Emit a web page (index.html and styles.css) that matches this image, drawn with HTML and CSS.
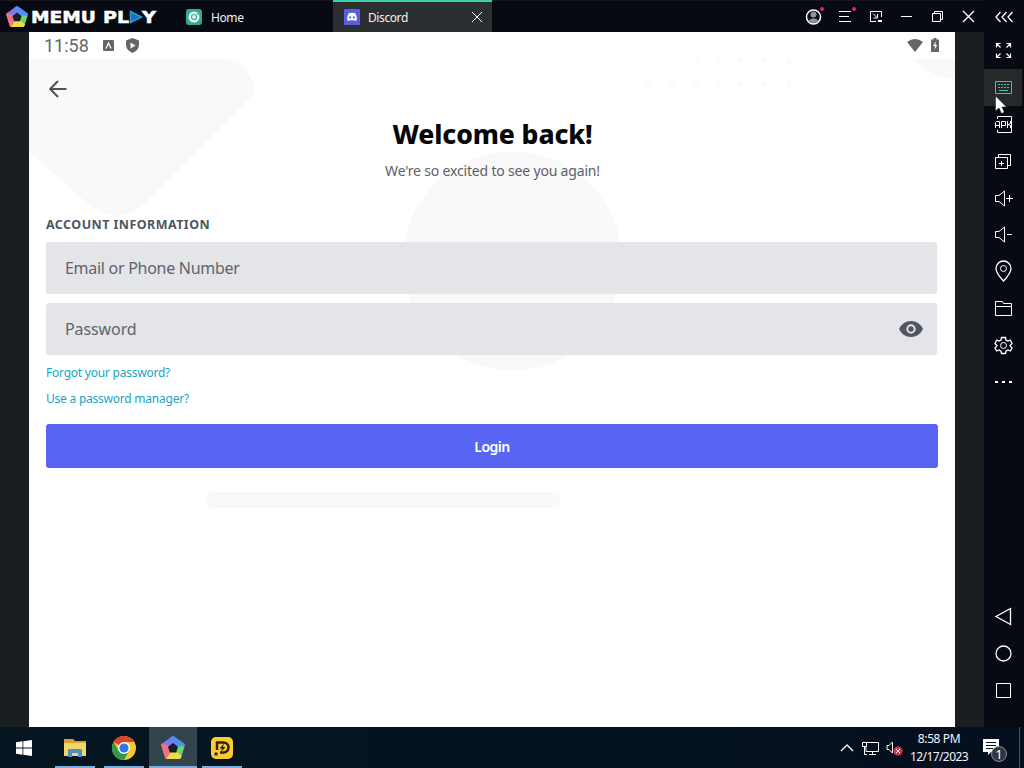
FILE: index.html
```html
<!DOCTYPE html>
<html lang="en">
<head>
    <meta charset="UTF-8">
    <meta name="viewport" content="width=device-width, initial-scale=1.0">
    <link rel="stylesheet" href="styles.css">
    <title>MEmu Play - Discord</title>
</head>
<body>
    <!-- shared pentagon logo -->
    <svg class="defs" width="0" height="0">
        <symbol id="pentagon" viewBox="0 0 24 24">
            <path d="M1 7.500L11 .6Q12 0 13 .6L23 7.500Q24 8.300 23.700 9.500L20 21.500Q19.500 23 18 23H6Q4.500 23 4 21.500L.3 9.500Q0 8.300 1 7.500Z" fill="#7f78ee"/>
            <path d="M9 2L11 .6Q12 0 13 .6L23 7.500Q24 8.300 23.700 9.500L23 12L16.500 11Z" fill="#4d8ff2"/>
            <path d="M23.400 10.500L20 21.500Q19.500 23 18 23L14.500 15L16.500 10Z" fill="#6fd56a"/>
            <path d="M20.500 20L20 21.500Q19.500 23 18 23H6Q4.800 23 4.300 22L10 15.500L15 15.500Z" fill="#f1dc45"/>
            <path d="M5.500 22.900Q4.300 22.500 4 21.500L.3 9.500Q0 8.300 1 7.500L8 10L9.500 16Z" fill="#ee7580"/>
            <path d="M12 7L17 10.800L15.200 16.500H8.800L7 10.800Z" class="pentagon-hole"/>
        </symbol>
    </svg>

    <div class="emulator">
        <div class="window">
            <header class="titlebar">
                <svg class="logo" width="22" height="22"><use href="#pentagon"/></svg>
                <svg class="wordmark" width="126" height="24" viewBox="0 0 126 24">
                    <text x="0" y="17.500" textLength="65" lengthAdjust="spacingAndGlyphs">MEMU</text>
                    <text x="72" y="17.500" textLength="26" lengthAdjust="spacingAndGlyphs">PL</text>
                    <path d="M99.500 6.500L110.500 12L99.500 17.500Z" fill="#1d6fb8" stroke="#2a9bd6" stroke-width="1.500"/>
                    <text x="111" y="17.500" textLength="14" lengthAdjust="spacingAndGlyphs">Y</text>
                </svg>
                <div class="tab tab-home">
                    <svg width="16" height="16" viewBox="0 0 16 16">
                        <rect width="16" height="16" rx="3" fill="#2fae8c"/>
                        <circle cx="8" cy="8" r="5.500" fill="#e9f8f4"/>
                        <circle cx="8" cy="8" r="2.500" fill="none" stroke="#2fae8c" stroke-width="1.200"/>
                        <path d="M10.500 4L12.500 6" stroke="#2fae8c"/>
                    </svg>
                    <span>Home</span>
                </div>
                <div class="tab tab-active">
                    <svg width="16" height="16" viewBox="0 0 16 16">
                        <rect width="16" height="16" rx="1" fill="#5a60dd"/>
                        <path d="M4.800 4.300Q8 3.300 11.200 4.300Q13.200 7.300 13 11Q11.800 12 10.600 12L10 11Q8 11.600 6 11L5.400 12Q4.200 12 3 11Q2.800 7.300 4.800 4.300Z" fill="#fff"/>
                        <circle cx="6.200" cy="8.400" r="1.100" fill="#5a60dd"/>
                        <circle cx="9.800" cy="8.400" r="1.100" fill="#5a60dd"/>
                    </svg>
                    <span>Discord</span>
                    <svg class="line tab-close" width="12" height="12" viewBox="0 0 12 12"><path d="M1 1L11 11M11 1L1 11"/></svg>
                </div>
                <div class="window-buttons">
                    <svg class="line" width="31" height="32" viewBox="0 0 31 32">
                        <circle cx="15.500" cy="17" r="7" fill="#0a0d16" stroke-width="1.500"/>
                        <circle cx="15.500" cy="14.500" r="3" class="grey"/>
                        <path d="M10 21Q15.500 15.500 21 21Q15.500 25 10 21Z" class="grey"/>
                        <circle cx="24" cy="9" r="2" class="dot"/>
                    </svg>
                    <svg class="line" width="31" height="32" viewBox="0 0 31 32">
                        <path d="M10 11.500H22M10 16.500H20M10 21.500H22"/>
                        <circle cx="25" cy="9" r="2" class="dot"/>
                    </svg>
                    <svg class="line" width="31" height="32" viewBox="0 0 31 32">
                        <path d="M16 21.500H10.500V11.500H21.500V17M13 13.500L17 17.500M17.500 14V18H13.500"/>
                        <path d="M18 21H22" stroke-width="2"/>
                    </svg>
                    <svg class="line" width="31" height="32" viewBox="0 0 31 32"><path d="M10 16.500H21"/></svg>
                    <svg class="line" width="31" height="32" viewBox="0 0 31 32"><path d="M10.500 13.500H18.500V21.500H10.500ZM12.500 13.500V11.500H20.500V19.500H18.500"/></svg>
                    <svg class="line" width="31" height="32" viewBox="0 0 31 32"><path d="M10 11L21 22M21 11L10 22" stroke-width="1.300"/></svg>
                </div>
            </header>

            <main class="screen">
                <svg class="backdrop" width="926" height="695" viewBox="29 32 926 695">
                    <path d="M29 59H228Q238 59 245 67L252 79Q259 88 250 98L145 203Q120 226 92 207L29 152Z"/>
                    <circle cx="512.500" cy="261" r="109.500"/>
                    <rect x="206" y="492" width="354" height="16" rx="5"/>
                    <path d="M912 59H955V79Q930 77 912 59Z"/>
                    <g>
                        <circle cx="648" cy="84" r="3.500"/><circle cx="672" cy="84" r="3.500"/><circle cx="697" cy="84" r="3.500"/><circle cx="718" cy="84" r="3"/><circle cx="740" cy="84" r="3.500"/><circle cx="764" cy="84" r="3.500"/><circle cx="789" cy="84" r="3.500"/>
                        <circle cx="648" cy="60" r="2"/><circle cx="697" cy="60" r="3"/><circle cx="718" cy="61" r="2"/><circle cx="740" cy="60" r="3"/><circle cx="764" cy="60" r="2.500"/><circle cx="789" cy="61" r="3"/>
                    </g>
                </svg>

                <div class="status">
                    <span class="time">11:58</span>
                    <svg width="11" height="11" viewBox="0 0 11 11">
                        <rect width="11" height="11" rx="1" fill="#666"/>
                        <path d="M3 8.500L5.500 3L8 8.500" fill="none" stroke="#fff" stroke-width="1.300"/>
                    </svg>
                    <svg class="shield" width="13" height="15" viewBox="0 0 13 15">
                        <path d="M6.500 0L13 2.500V7Q12.500 12.500 6.500 15Q.5 12.500 0 7V2.500Z" fill="#666"/>
                        <path d="M4.500 4.500L9.500 7.500L4.500 10.500Z" fill="#fff"/>
                    </svg>
                    <svg class="wifi" width="16" height="13" viewBox="0 0 16 13"><path d="M0 3Q8 -3 16 3L8 13Z" fill="#666"/></svg>
                    <svg class="battery" width="8" height="14" viewBox="0 0 8 14">
                        <path d="M2.500 0H5.500V1.500H8V14H0V1.500H2.500Z" fill="#666"/>
                        <path d="M5 3.500L2 8H4L3.500 11.500L6.300 7H4.500Z" fill="#fff"/>
                    </svg>
                </div>

                <svg class="back" width="18" height="18" viewBox="0 0 18 18"><path d="M17.500 9H1.500M9 1L1.200 9L9 17"/></svg>

                <h1>Welcome back!</h1>
                <p class="subtitle">We're so excited to see you again!</p>

                <form class="login">
                    <h2>ACCOUNT INFORMATION</h2>
                    <div class="field"><span class="email">Email or Phone Number</span></div>
                    <div class="field">
                        <span class="password">Password</span>
                        <svg width="24" height="16" viewBox="0 0 24 16">
                            <path d="M0 8Q4 0 12 0T24 8Q20 16 12 16T0 8Z" fill="#4f5660"/>
                            <circle cx="12" cy="8" r="3.700" fill="none" stroke="#e3e5e8" stroke-width="2"/>
                        </svg>
                    </div>
                    <a class="forgot">Forgot your password?</a>
                    <a class="manager">Use a password manager?</a>
                    <button type="button">Login</button>
                </form>
            </main>
        </div>

        <aside class="sidebar">
            <div class="collapse">
                <svg class="line" width="18" height="12" viewBox="0 0 18 12"><path d="M5.500 1L1 6L5.500 11M11.500 1L7 6L11.500 11M17.500 1L13 6L17.500 11" stroke-width="1.300"/></svg>
            </div>
            <div class="tool">
                <svg class="line" width="24" height="24" viewBox="0 0 24 24"><path d="M5.500 9.500V5.500H9.500M5.500 5.500L9.500 9.500M15.500 5.500H19.500V9.500M19.500 5.500L15.500 9.500M5.500 15.500V19.500H9.500M5.500 19.500L9.500 15.500M15.500 19.500H19.500V15.500M19.500 19.500L15.500 15.500" stroke-width="1.200"/></svg>
            </div>
            <div class="tool selected">
                <svg class="line" width="24" height="24" viewBox="0 0 24 24"><path d="M4.500 6.500H20.500V18.500H4.500Z"/><path d="M7 9.500H18M7 12.500H18" stroke-dasharray="2 1"/><path d="M8 15.500H17"/></svg>
            </div>
            <div class="tool">
                <svg class="line" width="24" height="24" viewBox="0 0 24 24"><path d="M6.500 7V4.500H20.500V20.500H6.500V18"/><path d="M4.500 16V10.500L5.500 9.500H8.500V16M4.500 13.500H8.500M10.500 16V9.500H14.500V13.500H10.500M16.500 9V16M19.500 9V11.500L17 12.500L19.500 13.500V16"/></svg>
            </div>
            <div class="tool">
                <svg class="line" width="24" height="24" viewBox="0 0 24 24"><path d="M4.500 8.500H16.500V19.500H4.500ZM7.500 8.500V5.500H19.500V16.500H16.500M8 14.500H13M10.500 12V17"/></svg>
            </div>
            <div class="tool">
                <svg class="line" width="24" height="24" viewBox="0 0 24 24"><path d="M4.500 9.500H8L13.500 5V20L8 15.500H4.500ZM15 12.500H22M18.500 9V16"/></svg>
            </div>
            <div class="tool">
                <svg class="line" width="24" height="24" viewBox="0 0 24 24"><path d="M4.500 9.500H8L13.500 5V20L8 15.500H4.500ZM16 12.500H21"/></svg>
            </div>
            <div class="tool">
                <svg class="line" width="24" height="24" viewBox="0 0 24 24"><path d="M12.500 22Q5 14 5 9.500A7.500 7.500 0 0 1 20 9.500Q20 14 12.500 22Z" stroke-width="1.300"/><circle cx="12.500" cy="9.500" r="3"/></svg>
            </div>
            <div class="tool">
                <svg class="line" width="24" height="24" viewBox="0 0 24 24"><path d="M4.500 19.500V5.500H11.500L12.500 7.500H20.500V19.500ZM4.500 10.500H20.500"/></svg>
            </div>
            <div class="tool">
                <svg class="line" width="24" height="24" viewBox="0 0 24 24"><path d="M10.500 4.500H14.500L15 7L17 8L19.300 7L21 10.500L19 12.500L21 15L19.300 18L17 17L15 18.200L14.500 20.500H10.500L10 18.200L8 17L5.700 18L4 15L6 12.500L4 10.500L5.700 7L8 8L10 7Z" stroke-width="1.300"/><circle cx="12.500" cy="12.500" r="3"/></svg>
            </div>
            <div class="tool">
                <svg class="line" width="24" height="24" viewBox="0 0 24 24"><path d="M4 12H7M11 12H14M18 12H21" stroke-width="2"/></svg>
            </div>
            <div class="tool nav-first">
                <svg class="line" width="24" height="24" viewBox="0 0 24 24"><path d="M19.500 4.500V20.500L5 12.500Z" stroke-width="1.300"/></svg>
            </div>
            <div class="tool">
                <svg class="line" width="24" height="24" viewBox="0 0 24 24"><circle cx="12.500" cy="12.500" r="7.500" stroke-width="1.300"/></svg>
            </div>
            <div class="tool">
                <svg class="line" width="24" height="24" viewBox="0 0 24 24"><path d="M5.500 5.500H19.500V19.500H5.500Z"/></svg>
            </div>
        </aside>
    </div>

    <footer class="taskbar">
        <div class="start">
            <svg width="16" height="16" viewBox="0 0 16 16"><path d="M0 2.200L6.500 1.300V7.500H0ZM7.300 1.200L16 0V7.500H7.300ZM0 8.400H6.500V14.700L0 13.800ZM7.300 8.400H16V16L7.300 14.800Z" fill="#fff"/></svg>
        </div>
        <div class="app">
            <svg width="22" height="20" viewBox="0 0 22 20">
                <path d="M0 1H9L11 3H22V18H0Z" fill="#d9a334"/>
                <path d="M0 5H22V18H0Z" fill="#f6d568"/>
                <path d="M4 19V12Q4 11 5 11H17Q18 11 18 12V19H14V15H8V19Z" fill="#4a92c4"/>
            </svg>
        </div>
        <div class="app">
            <svg width="24" height="24" viewBox="0 0 24 24">
                <circle cx="12" cy="12" r="12" fill="#f9c92f"/>
                <path d="M12 12L1.600 6A12 12 0 0 1 22.400 6H12Z" fill="#e0402f"/>
                <path d="M1.600 6A12 12 0 0 0 12 24L17.200 15L12 12L6.800 15Z" fill="#2d9b4b"/>
                <circle cx="12" cy="12" r="6" fill="#fff"/>
                <circle cx="12" cy="12" r="4.600" fill="#2f78e4"/>
            </svg>
        </div>
        <div class="app current">
            <svg width="24" height="24"><use href="#pentagon"/></svg>
        </div>
        <div class="app">
            <svg width="22" height="22" viewBox="0 0 22 22">
                <rect width="22" height="22" rx="5" fill="#fbcb32"/>
                <path d="M6 13V5.500H12.500A5 5 0 0 1 12.500 15.500H9" fill="none" stroke="#2b2414" stroke-width="2.500"/>
                <path d="M13 6.500L8.500 11.500H11L10 15L14.500 10H12Z" fill="#2b2414"/>
                <path d="M3.500 15.500H6.500V18.500H3.500Z" fill="#2b2414"/>
            </svg>
        </div>

        <div class="tray">
            <svg class="line" width="14" height="8" viewBox="0 0 14 8"><path d="M1 7L7 1L13 7" stroke-width="1.400"/></svg>
            <svg class="line monitor" width="17" height="14" viewBox="0 0 17 14"><path d="M5 1.500H16.500V10.500H4V6M10.500 10.500V13M7 13.500H14M.5 1.500H4.500V5.500H.5ZM2.500 5.500V13.500H5"/></svg>
            <svg class="line" width="17" height="16" viewBox="0 0 17 16">
                <path d="M1 5.500H3L6.500 2V13L3 9.500H1Z"/>
                <circle cx="12" cy="11" r="4.500" class="mute"/>
                <path d="M10 9L14 13M14 9L10 13"/>
            </svg>
            <div class="clock">
                <span class="hour">8:58 PM</span>
                <span class="date">12/17/2023</span>
            </div>
            <svg class="notify" width="26" height="28" viewBox="0 0 26 28">
                <path d="M0 5H16V18H8L5 21V18H0Z" fill="#fff"/>
                <path d="M3 8.500H13M3 11.500H13M3 14.500H10" stroke="#07111f"/>
                <circle cx="16" cy="20" r="7.500" fill="#30363e" stroke="#8b9096"/>
                <text x="16" y="24.500" text-anchor="middle">1</text>
            </svg>
        </div>
    </footer>

    <svg class="cursor" width="12" height="18" viewBox="0 0 12 18"><path d="M.5 0V15L4 12L6.500 17.500L9.300 16.300L7 11H11.500Z" fill="#fff" stroke="#111" stroke-width=".5"/></svg>
</body>
</html>
```
FILE: styles.css
```css
* {
    box-sizing: border-box;
}

body {
    margin: 0;
    width: 1024px;
    height: 768px;
    overflow: hidden;
    background: #070a13;
    font-family: "Noto Sans", sans-serif;
}

svg {
    display: block;
    flex: none;
}

span,
a,
h1,
h2,
.subtitle {
    white-space: nowrap;
}

.defs {
    position: absolute;
}

.line {
    fill: none;
    stroke: #fff;
    stroke-width: 1;
}

.pentagon-hole {
    fill: #16202b;
}

.emulator {
    display: flex;
    height: 727px;
}

.window {
    width: 984px;
    background: #1a1e20;
}

/* title bar */
.titlebar {
    display: flex;
    align-items: center;
    height: 32px;
    padding-left: 6px;
    background: #070a13;
    border-top: 1px solid #15191c;
}

.wordmark {
    margin-left: 3px;
    overflow: visible;
    fill: #fff;
    font-family: "DejaVu Sans", sans-serif;
    font-weight: bold;
    font-size: 16px;
}

.wordmark text {
    stroke: #fff;
    stroke-width: .5;
}

.tab {
    display: flex;
    align-items: center;
    height: 31px;
    color: #f0f1f3;
    font-size: 12px;
    letter-spacing: -.4px;
}

.tab span {
    margin-left: 9px;
    padding-top: 1px;
}

.tab-home {
    width: 147px;
    margin-left: 29px;
}

.tab-active {
    width: 159px;
    height: 32px;
    padding: 0 9px 1px 11px;
    background: #2b2f31;
    border-top: 2px solid #3fcfa5;
    margin-top: -1px;
}

.tab-active span {
    margin-left: 8px;
}

.tab-close {
    margin-left: auto;
}

.window-buttons {
    display: flex;
    margin-left: 306px;
}

.window-buttons svg {
    margin-top: -1px;
}

.line .grey {
    fill: #8e939b;
    stroke: none;
}

.line .dot {
    fill: #e0245e;
    stroke: none;
}

/* emulated android screen */
.screen {
    position: relative;
    width: 926px;
    height: 695px;
    margin-left: 29px;
    background: #fff;
}

.backdrop {
    position: absolute;
    top: 0;
    left: 0;
    fill: #f9f9f9;
}

.backdrop g {
    fill: #fbfbfb;
}

.status,
.back,
h1,
.subtitle,
.login {
    position: relative;
}

.status {
    display: flex;
    align-items: center;
    height: 27px;
    padding: 0 16px 0 15px;
}

.time {
    width: 59px;
    color: #666;
    font-family: Roboto, sans-serif;
    font-size: 18px;
}

.shield {
    margin-left: 12px;
}

.wifi {
    margin-left: auto;
    margin-right: 8px;
}

.battery {
    margin-bottom: 2px;
}

.back {
    margin: 21px 0 0 20px;
    fill: none;
    stroke: #4f5256;
    stroke-width: 2;
}

h1 {
    margin: 17px 0 0;
    padding-left: 1px;
    font-size: 26.5px;
    font-weight: 800;
    line-height: 38px;
    letter-spacing: -.1px;
    text-align: center;
    color: #060607;
}

.subtitle {
    margin: 8px 0 0;
    padding-left: 1px;
    font-size: 14px;
    line-height: 20px;
    letter-spacing: -.18px;
    text-align: center;
    color: #5c6068;
}

.login {
    display: flex;
    flex-direction: column;
    align-items: flex-start;
    padding: 35px 17px 0;
}

h2 {
    margin: 0 0 8px;
    font-size: 12.5px;
    line-height: 18px;
    letter-spacing: .45px;
    color: #4f5660;
}

.field {
    display: flex;
    align-items: center;
    justify-content: space-between;
    width: 891px;
    height: 52px;
    margin-bottom: 9px;
    padding: 0 14px 0 19px;
    background: #e3e5e8;
    border-radius: 3px;
    color: #5f646c;
    font-size: 16px;
}

.email {
    letter-spacing: -.28px;
}

.password {
    letter-spacing: -.1px;
}

.login a {
    font-size: 12px;
    line-height: 18px;
    letter-spacing: -.23px;
    color: #18a5c4;
}

.manager {
    margin-top: 8px;
}

button {
    width: 892px;
    height: 44px;
    margin-top: 16px;
    border: 0;
    border-radius: 3px;
    background: #5865f2;
    color: #fff;
    font-family: inherit;
    font-size: 14px;
    font-weight: 600;
    letter-spacing: -.5px;
}

/* right tool strip */
.sidebar {
    display: flex;
    flex-direction: column;
    width: 40px;
    padding-bottom: 18px;
    background: #070a13;
}

.collapse {
    display: flex;
    align-items: center;
    justify-content: center;
    height: 32px;
    padding-top: 1px;
}

.tool {
    display: flex;
    align-items: center;
    justify-content: center;
    width: 38px;
    height: 36.900px;
    padding-bottom: 1px;
}

.selected {
    background: #25292b;
}

.selected .line {
    stroke: #35c99b;
}

.nav-first {
    margin-top: auto;
}

.cursor {
    position: absolute;
    left: 995px;
    top: 96px;
}

/* taskbar */
.taskbar {
    display: flex;
    align-items: center;
    height: 41px;
    background: linear-gradient(90deg, #041621, #050f1f);
}

.start {
    width: 55px;
    padding-left: 16px;
}

.app {
    display: flex;
    align-items: center;
    justify-content: center;
    width: 40px;
    height: 41px;
    margin-right: 9px;
    padding-top: 2px;
    border-bottom: 2px solid #76aede;
}

.current {
    width: 48px;
    margin: 0 5px 0 -4px;
    background: #33444d;
}

.current .pentagon-hole {
    fill: #33444d;
}

.tray {
    display: flex;
    align-items: center;
    height: 41px;
    margin-left: auto;
    margin-right: 4px;
    padding-right: 10px;
    border-right: 1px solid #4b535d;
}

.monitor {
    margin: 0 7px 0 8px;
}

.clock {
    display: flex;
    flex-direction: column;
    align-items: center;
    width: 60px;
    margin: 0 14px 0 6px;
    color: #f4f5f7;
    font-size: 12px;
    line-height: 18px;
}

.hour {
    letter-spacing: -.4px;
}

.date {
    letter-spacing: -.6px;
}

.mute {
    fill: #d0393f;
    stroke: none;
}

.notify text {
    fill: #fff;
    font-size: 13px;
}
```
